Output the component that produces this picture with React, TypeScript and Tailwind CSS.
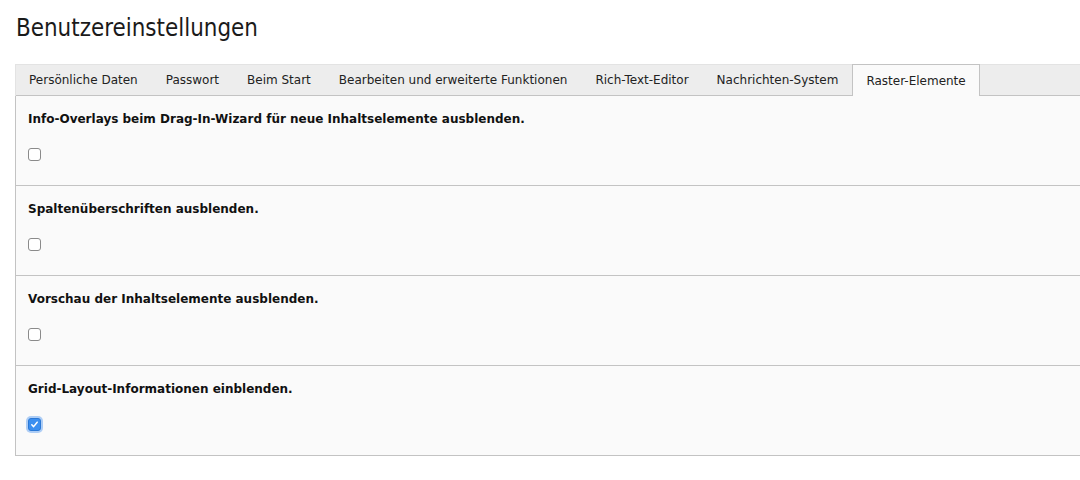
const tabs = [
  'Persönliche Daten',
  'Passwort',
  'Beim Start',
  'Bearbeiten und erweiterte Funktionen',
  'Rich-Text-Editor',
  'Nachrichten-System',
  'Raster-Elemente',
]

const options = [
  { label: 'Info-Overlays beim Drag-In-Wizard für neue Inhaltselemente ausblenden.', checked: false },
  { label: 'Spaltenüberschriften ausblenden.', checked: false },
  { label: 'Vorschau der Inhaltselemente ausblenden.', checked: false },
  { label: 'Grid-Layout-Informationen einblenden.', checked: true },
]

function Checkbox({ checked }: { checked: boolean }) {
  if (checked) {
    return (
      <div className="w-[13px] h-[13px] rounded-[3px] bg-[#3b8ff0] border border-[#2a78d6] flex items-center justify-center shadow-[0_0_0_2px_rgba(80,150,240,0.45)]">
        <svg width="9" height="9" viewBox="0 0 9 9" fill="none">
          <path d="M1.8 4.8 L3.6 6.6 L7.2 2.2" stroke="white" strokeWidth="1.5" strokeLinecap="round" strokeLinejoin="round" />
        </svg>
      </div>
    )
  }
  return <div className="w-[13px] h-[13px] rounded-[3px] bg-white border border-[#8a8a8a]" />
}

export default function App() {
  const active = 6
  return (
    <div className="w-[1080px] h-[480px] bg-white overflow-hidden" style={{ fontFamily: 'Verdana, "DejaVu Sans", sans-serif' }}>
      {/* Title */}
      <div className="pl-4 pt-[12px] h-[64px]">
        <h1
          className="inline-block origin-left [transform:scaleX(0.86)] text-[25px] leading-[32px] text-[#1a1a1a]"
          style={{ fontFamily: '"DejaVu Sans", sans-serif' }}
        >
          Benutzereinstellungen
        </h1>
      </div>

      <div className="ml-[15px] w-[1080px]">
        {/* Tabs */}
        <div className="flex h-[32px] bg-[#ededed] border-t border-l border-[#e3e3e3]">
          {tabs.map((t, i) => (
            <div
              key={t}
              className={
                i === active
                  ? 'px-[13px] h-[32px] -mt-px flex items-center text-[12px] text-[#222] bg-[#fafafa] border border-b-0 border-[#c3c3c3]'
                  : i === 0
                    ? 'pl-[13px] pr-[14px] h-[31px] flex items-center text-[12px] text-[#222] border-b border-[#c3c3c3]'
                    : 'px-[14px] h-[31px] flex items-center text-[12px] text-[#222] border-b border-[#c3c3c3]'
              }
            >
              {t}
            </div>
          ))}
          <div className="flex-1 h-[31px] border-b border-[#c3c3c3]" />
        </div>

        {/* Panel */}
        <div className="bg-[#fafafa] border-l border-b border-[#c3c3c3]">
          {options.map((o, i) => (
            <div
              key={o.label}
              className={
                i < options.length - 1
                  ? 'h-[90px] px-3 pt-[16px] border-b border-[#c3c3c3]'
                  : 'h-[89px] px-3 pt-[16px]'
              }
            >
              <div className="text-[12px] leading-[15px] font-bold text-[#111]">{o.label}</div>
              <div className="mt-[21px]">
                <Checkbox checked={o.checked} />
              </div>
            </div>
          ))}
        </div>
      </div>
    </div>
  )
}
